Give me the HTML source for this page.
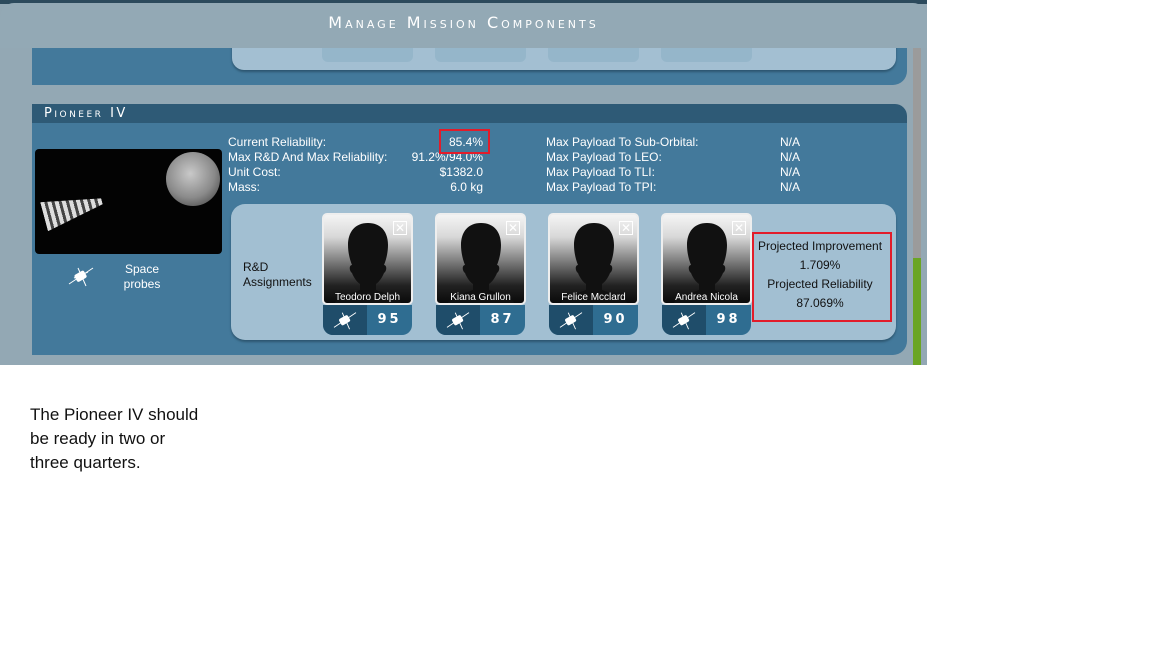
<!DOCTYPE html>
<html><head><meta charset="utf-8"><style>
*{margin:0;padding:0;box-sizing:border-box}
body{width:1152px;height:648px;background:#fff;position:relative;overflow:hidden;font-family:"Liberation Sans",sans-serif}
.a{position:absolute}
.shot{left:0;top:0;width:927px;height:365px;background:#93a8b4;overflow:hidden}
.hdr{left:0;top:3px;width:927px;height:45px;background:#93a9b5;border-radius:14px 14px 0 0;color:#fff;text-align:center;font-size:16px;letter-spacing:3px;line-height:40px;font-variant:small-caps;font-family:"DejaVu Sans",sans-serif}
.blue{background:#43799b}
.lt{font-size:12px;color:#fff;line-height:15px}
.card{width:91px;height:122px}
.ph{left:0;top:0;width:91px;height:92px;border:2px solid #eee;border-radius:5px;background:linear-gradient(#f4f4f4,#d8d8d8 25%,#222 80%,#0a0a0a);overflow:hidden}
.nm{left:0;width:87px;top:77px;text-align:center;color:#fff;font-size:10px}
.bar{left:1px;top:92px;width:89px;height:30px;border-radius:0 0 10px 10px;background:#2f6d91;overflow:hidden}
.bl{left:0;top:0;width:44px;height:30px;background:#1f4d6a}
.num{left:44px;width:45px;top:7px;text-align:center;color:#fff;font-size:13px;font-weight:bold;letter-spacing:3px;font-family:"DejaVu Sans",sans-serif}
.x{right:4px;top:6px;width:14px;height:14px;border:1px solid #fff;color:#fff;font-size:12px;line-height:12px;text-align:center}
</style></head><body>
<div class="a shot">
  <div class="a" style="left:0;top:0;width:927px;height:4px;background:#2c4a5c"></div>
  <div class="a blue" style="left:32px;top:40px;width:875px;height:45px;border-radius:0 0 14px 0"></div>
  <div class="a" style="left:232px;top:40px;width:664px;height:30px;background:#a3bfd2;border-radius:0 0 12px 12px;box-shadow:0 2px 2px #2d5670"></div>
  <div class="a" style="left:322px;top:40px;width:91px;height:22px;background:#95b6ca;border-radius:6px"></div>
  <div class="a" style="left:435px;top:40px;width:91px;height:22px;background:#95b6ca;border-radius:6px"></div>
  <div class="a" style="left:548px;top:40px;width:91px;height:22px;background:#95b6ca;border-radius:6px"></div>
  <div class="a" style="left:661px;top:40px;width:91px;height:22px;background:#95b6ca;border-radius:6px"></div>
  <div class="a hdr">Manage Mission Components</div>
  <div class="a" style="left:913px;top:48px;width:8px;height:210px;background:#9b9b9b"></div>
  <div class="a" style="left:913px;top:258px;width:8px;height:107px;background:#6aa524"></div>
  <div class="a" style="left:32px;top:104px;width:875px;height:19px;background:#2e5a76;border-radius:0 12px 0 0;color:#fff;font-size:13px;letter-spacing:2.5px;line-height:19px;padding-left:12px;font-family:'DejaVu Sans',sans-serif;font-variant:small-caps">Pioneer IV</div>
  <div class="a blue" style="left:32px;top:123px;width:875px;height:232px;border-radius:0 0 14px 0"></div>
  <div class="a" style="left:35px;top:149px;width:187px;height:105px;background:#030303;border-radius:4px;overflow:hidden">
    <div class="a" style="left:131px;top:3px;width:54px;height:54px;border-radius:50%;background:radial-gradient(circle at 45% 40%,#c9c9c9,#8a8a8a 55%,#333 100%)"></div>
    <div class="a" style="left:8px;top:45px;width:60px;height:30px;background:repeating-linear-gradient(90deg,#ddd 0 4px,#444 4px 7px);transform:rotate(-15deg);clip-path:polygon(0 0,100% 40%,100% 60%,0 100%)"></div>
  </div>
  <svg class="a" style="left:66px;top:264px" width="30" height="24" viewBox="0 0 30 24"><path d="M3 20L27 4M12 4l8 18M8 14l14-6" stroke="#fff" stroke-width="1"/><rect x="9" y="8" width="11" height="8" rx="2" fill="#fff" transform="rotate(-30 15 12)"/></svg>
  <div class="a lt" style="left:104px;top:262px;width:76px;text-align:center">Space<br>probes</div>
  <div class="a lt" style="left:228px;top:135px">Current Reliability:<br>Max R&amp;D And Max Reliability:<br>Unit Cost:<br>Mass:</div>
  <div class="a lt" style="left:400px;top:135px;width:83px;text-align:right">85.4%<br>91.2%/94.0%<br>$1382.0<br>6.0 kg</div>
  <div class="a" style="left:439px;top:129px;width:51px;height:25px;border:2px solid #e21c2a"></div>
  <div class="a lt" style="left:546px;top:135px">Max Payload To Sub-Orbital:<br>Max Payload To LEO:<br>Max Payload To TLI:<br>Max Payload To TPI:</div>
  <div class="a lt" style="left:780px;top:135px">N/A<br>N/A<br>N/A<br>N/A</div>
  <div class="a" style="left:231px;top:204px;width:665px;height:136px;background:#a2bfd2;border-radius:14px;box-shadow:0 2px 2px #2d5670"></div>
  <div class="a" style="left:243px;top:260px;font-size:12px;line-height:15px;color:#111">R&amp;D<br>Assignments</div>
  <div class="a card" style="left:322px;top:213px"><div class="a ph"><svg class="a" style="left:10px;top:6px" width="68" height="84" viewBox="0 0 68 84"><path d="M34 2c-13 0-20 9-20 22 0 8 2 15 4 20-3 0-3 6 0 8 2 5 5 9 8 11v6c-10 4-24 7-26 15h68c-2-8-16-11-26-15v-6c3-2 6-6 8-11 3-2 3-8 0-8 2-5 4-12 4-20C54 11 47 2 34 2z" fill="#111"/></svg><div class="a x">✕</div><div class="a nm">Teodoro Delph</div></div><div class="a bar"><div class="a bl"><svg class="a" style="left:8px;top:4px" width="28" height="22" viewBox="0 0 30 24"><path d="M3 20L27 4M12 4l8 18" stroke="#fff"/><rect x="9" y="8" width="11" height="8" rx="2" fill="#fff" transform="rotate(-30 15 12)"/></svg></div><div class="a num">95</div></div></div>
  <div class="a card" style="left:435px;top:213px"><div class="a ph"><svg class="a" style="left:10px;top:6px" width="68" height="84" viewBox="0 0 68 84"><path d="M34 2c-13 0-20 9-20 22 0 8 2 15 4 20-3 0-3 6 0 8 2 5 5 9 8 11v6c-10 4-24 7-26 15h68c-2-8-16-11-26-15v-6c3-2 6-6 8-11 3-2 3-8 0-8 2-5 4-12 4-20C54 11 47 2 34 2z" fill="#111"/></svg><div class="a x">✕</div><div class="a nm">Kiana Grullon</div></div><div class="a bar"><div class="a bl"><svg class="a" style="left:8px;top:4px" width="28" height="22" viewBox="0 0 30 24"><path d="M3 20L27 4M12 4l8 18" stroke="#fff"/><rect x="9" y="8" width="11" height="8" rx="2" fill="#fff" transform="rotate(-30 15 12)"/></svg></div><div class="a num">87</div></div></div>
  <div class="a card" style="left:548px;top:213px"><div class="a ph"><svg class="a" style="left:10px;top:6px" width="68" height="84" viewBox="0 0 68 84"><path d="M34 2c-13 0-20 9-20 22 0 8 2 15 4 20-3 0-3 6 0 8 2 5 5 9 8 11v6c-10 4-24 7-26 15h68c-2-8-16-11-26-15v-6c3-2 6-6 8-11 3-2 3-8 0-8 2-5 4-12 4-20C54 11 47 2 34 2z" fill="#111"/></svg><div class="a x">✕</div><div class="a nm">Felice Mcclard</div></div><div class="a bar"><div class="a bl"><svg class="a" style="left:8px;top:4px" width="28" height="22" viewBox="0 0 30 24"><path d="M3 20L27 4M12 4l8 18" stroke="#fff"/><rect x="9" y="8" width="11" height="8" rx="2" fill="#fff" transform="rotate(-30 15 12)"/></svg></div><div class="a num">90</div></div></div>
  <div class="a card" style="left:661px;top:213px"><div class="a ph"><svg class="a" style="left:10px;top:6px" width="68" height="84" viewBox="0 0 68 84"><path d="M34 2c-13 0-20 9-20 22 0 8 2 15 4 20-3 0-3 6 0 8 2 5 5 9 8 11v6c-10 4-24 7-26 15h68c-2-8-16-11-26-15v-6c3-2 6-6 8-11 3-2 3-8 0-8 2-5 4-12 4-20C54 11 47 2 34 2z" fill="#111"/></svg><div class="a x">✕</div><div class="a nm">Andrea Nicola</div></div><div class="a bar"><div class="a bl"><svg class="a" style="left:8px;top:4px" width="28" height="22" viewBox="0 0 30 24"><path d="M3 20L27 4M12 4l8 18" stroke="#fff"/><rect x="9" y="8" width="11" height="8" rx="2" fill="#fff" transform="rotate(-30 15 12)"/></svg></div><div class="a num">98</div></div></div>
  <div class="a" style="left:752px;top:232px;width:140px;height:90px;border:2px solid #e21c2a"></div>
  <div class="a" style="left:752px;top:237px;width:136px;text-align:center;font-size:12px;color:#111;line-height:19px">Projected Improvement<br>1.709%<br>Projected Reliability<br>87.069%</div>
</div>
<div class="a" style="left:30px;top:403px;font-size:17px;line-height:24px;color:#111">The Pioneer IV should<br>be ready in two or<br>three quarters.</div>
</body></html>
